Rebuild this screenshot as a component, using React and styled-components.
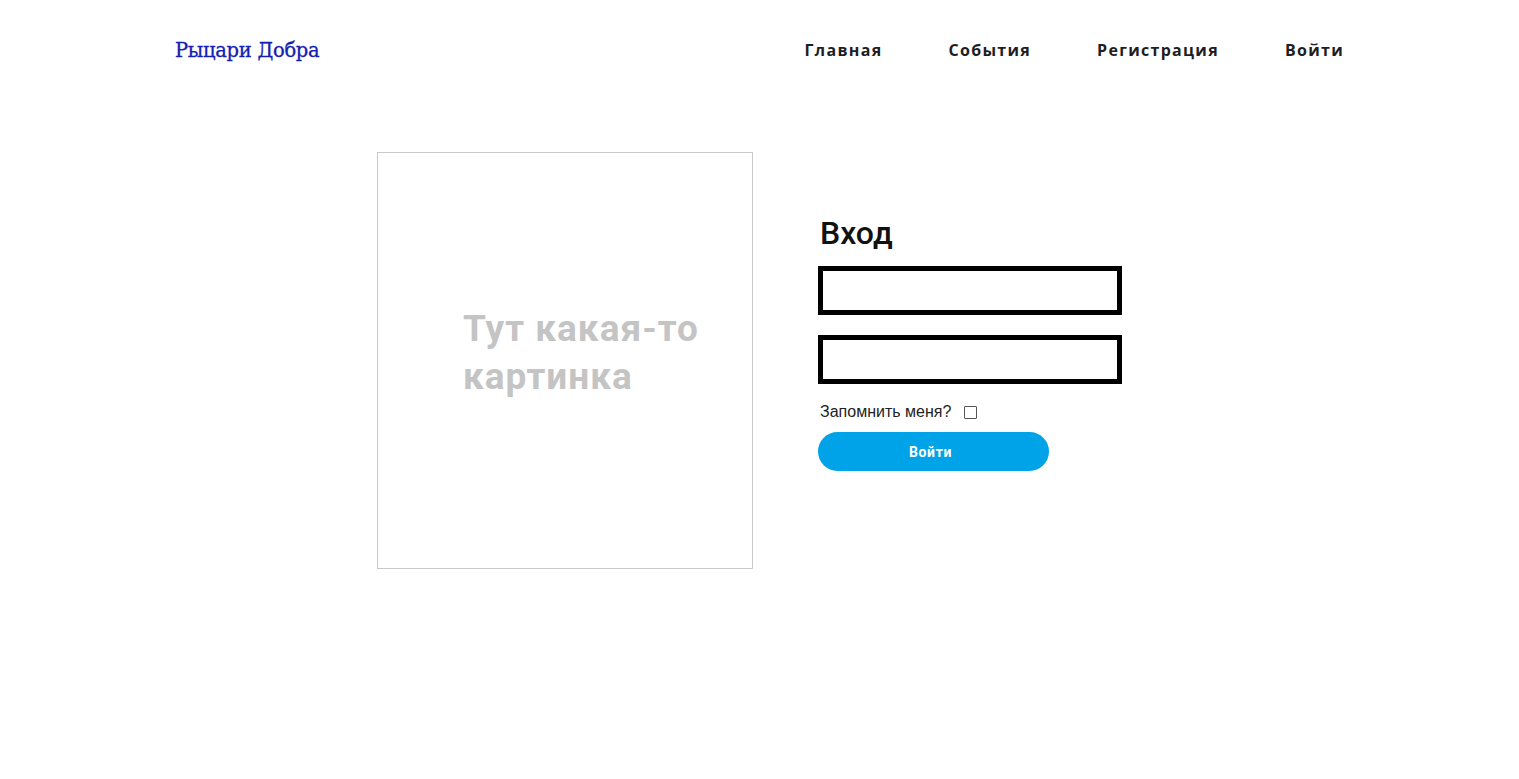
import React from "react";
import styled, { createGlobalStyle } from "styled-components";

const Global = createGlobalStyle`
  html, body { margin: 0; padding: 0; background: #fff; }
  body { font-family: "Liberation Sans", Arial, sans-serif; }
  * { box-sizing: border-box; }
`;

const Header = styled.header`
  max-width: 1169px;
  margin: 0 auto;
  padding-top: 37px;
  display: flex;
  align-items: center;
  justify-content: space-between;
`;

const Logo = styled.a`
  font-family: "DejaVu Serif", "Liberation Serif", serif;
  font-size: 19.5px;
  color: #1420b0;
  text-decoration: none;
  letter-spacing: -0.3px;
  margin-top: 2px;
  -webkit-text-stroke: 0.3px #1420b0;
`;

const Nav = styled.nav`
  display: flex;
  gap: 66px;
`;

const NavLink = styled.a`
  font-family: "Open Sans", sans-serif;
  font-weight: 700;
  font-size: 16px;
  letter-spacing: 1.3px;
  color: #1e1e22;
  text-decoration: none;
`;

const Main = styled.main`
  display: flex;
  justify-content: center;
  gap: 65px;
  margin-top: 90px;
`;

const Picture = styled.div`
  width: 376px;
  height: 417px;
  border: 1px solid #c8c8c8;
  display: flex;
  flex-direction: column;
  justify-content: center;
  padding-left: 85px;
  padding-bottom: 16px;
`;

const PictureText = styled.div`
  font-family: "Roboto", sans-serif;
  font-weight: 700;
  font-size: 37px;
  line-height: 48px;
  letter-spacing: 1px;
  color: #c4c4c4;
`;

const Form = styled.form`
  width: 324px;
  display: flex;
  flex-direction: column;
  align-items: flex-start;
  padding-top: 61px;
`;

const Title = styled.h1`
  font-family: "Roboto", sans-serif;
  font-weight: 500;
  font-size: 32px;
  line-height: 40px;
  margin: 0 0 13px 2px;
  color: #111;
`;

const Input = styled.input`
  width: 304px;
  height: 49px;
  border: 5px solid #000;
  background: #fff;
  outline: none;
  margin: 0 0 ${(p) => p.$gap}px 0;
  padding: 0 8px;
  font-size: 16px;
`;

const Remember = styled.label`
  display: flex;
  align-items: center;
  margin-left: 2px;
  font-family: "Liberation Sans", Arial, sans-serif;
  font-size: 16px;
  color: #222;
  height: 18px;
`;

const Check = styled.input`
  width: 13px;
  height: 13px;
  margin: 0 0 0 13px;
  appearance: none;
  border: 1px solid #555;
  border-radius: 1px;
  background: #fff;
`;

const Button = styled.button`
  margin-top: 11px;
  width: 231px;
  height: 39px;
  border: none;
  border-radius: 20px;
  background: #00a3e8;
  color: #fff;
  font-family: "Roboto", sans-serif;
  font-weight: 700;
  font-size: 14px;
  letter-spacing: 0.6px;
  padding-right: 12px;
  cursor: pointer;
`;

export default function App() {
  return (
    <>
      <Global />
      <Header>
        <Logo href="#">Рыцари Добра</Logo>
        <Nav>
          <NavLink href="#">Главная</NavLink>
          <NavLink href="#">События</NavLink>
          <NavLink href="#">Регистрация</NavLink>
          <NavLink href="#">Войти</NavLink>
        </Nav>
      </Header>
      <Main>
        <Picture>
          <PictureText>
            Тут какая-то
            <br />
            картинка
          </PictureText>
        </Picture>
        <Form onSubmit={(e) => e.preventDefault()}>
          <Title>Вход</Title>
          <Input type="text" $gap={20} />
          <Input type="password" $gap={19} />
          <Remember>
            Запомнить меня?
            <Check type="checkbox" />
          </Remember>
          <Button type="submit">Войти</Button>
        </Form>
      </Main>
    </>
  );
}
